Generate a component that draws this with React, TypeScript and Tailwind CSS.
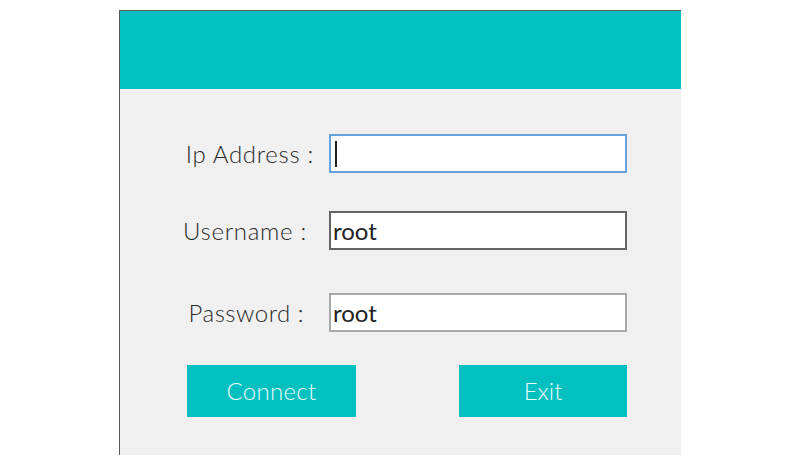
import React from "react";

const font = { fontFamily: "Lato, 'DejaVu Sans', sans-serif" };

export default function App() {
  return (
    <div className="w-[800px] h-[463px] bg-white overflow-hidden" style={font}>
      <div className="ml-[119px] mt-[10px] w-[562px] h-[445px] border-l border-t border-[#5a5a5a] bg-[#f0f0f0] flex flex-col">
        <div className="h-[78px] bg-[#02c0c0] shrink-0" />
        <div className="flex flex-col">
          <div className="flex items-center mt-[45px] h-[39px]">
            <div className="w-[209px] pr-[15px] text-right text-[24px] leading-none font-light text-[#2a2a2a] tracking-[0.7px]">Ip Address :</div>
            <div className="w-[298px] h-[39px] bg-white border-2 border-[#66a3dd] flex items-center pl-[4px]">
              <div className="w-[2px] h-[26px] bg-[#222]" />
            </div>
          </div>
          <div className="flex items-center mt-[38px] h-[39px]">
            <div className="w-[209px] pr-[22px] text-right text-[24px] leading-none font-light text-[#2a2a2a] tracking-[0.7px]">Username :</div>
            <div className="w-[298px] h-[39px] bg-white border-2 border-[#646464] flex items-center pl-[2px] text-[24px] leading-none text-[#222]">root</div>
          </div>
          <div className="flex items-center mt-[43px] h-[39px]">
            <div className="w-[209px] pr-[25px] text-right text-[24px] leading-none font-light text-[#2a2a2a] tracking-[0.5px]">Password :</div>
            <div className="w-[298px] h-[39px] bg-white border-2 border-[#a8a8a8] flex items-center pl-[2px] text-[24px] leading-none text-[#222]">root</div>
          </div>
          <div className="flex mt-[33px] h-[52px] pl-[67px]">
            <div className="w-[169px] h-[52px] bg-[#02c0c0] flex items-center justify-center text-[24px] leading-none font-light text-[#e6fafa] tracking-[0.3px]">Connect</div>
            <div className="w-[168px] h-[52px] bg-[#02c0c0] flex items-center justify-center text-[24px] leading-none font-light text-[#e6fafa] ml-[103px]">Exit</div>
          </div>
        </div>
      </div>
    </div>
  );
}
